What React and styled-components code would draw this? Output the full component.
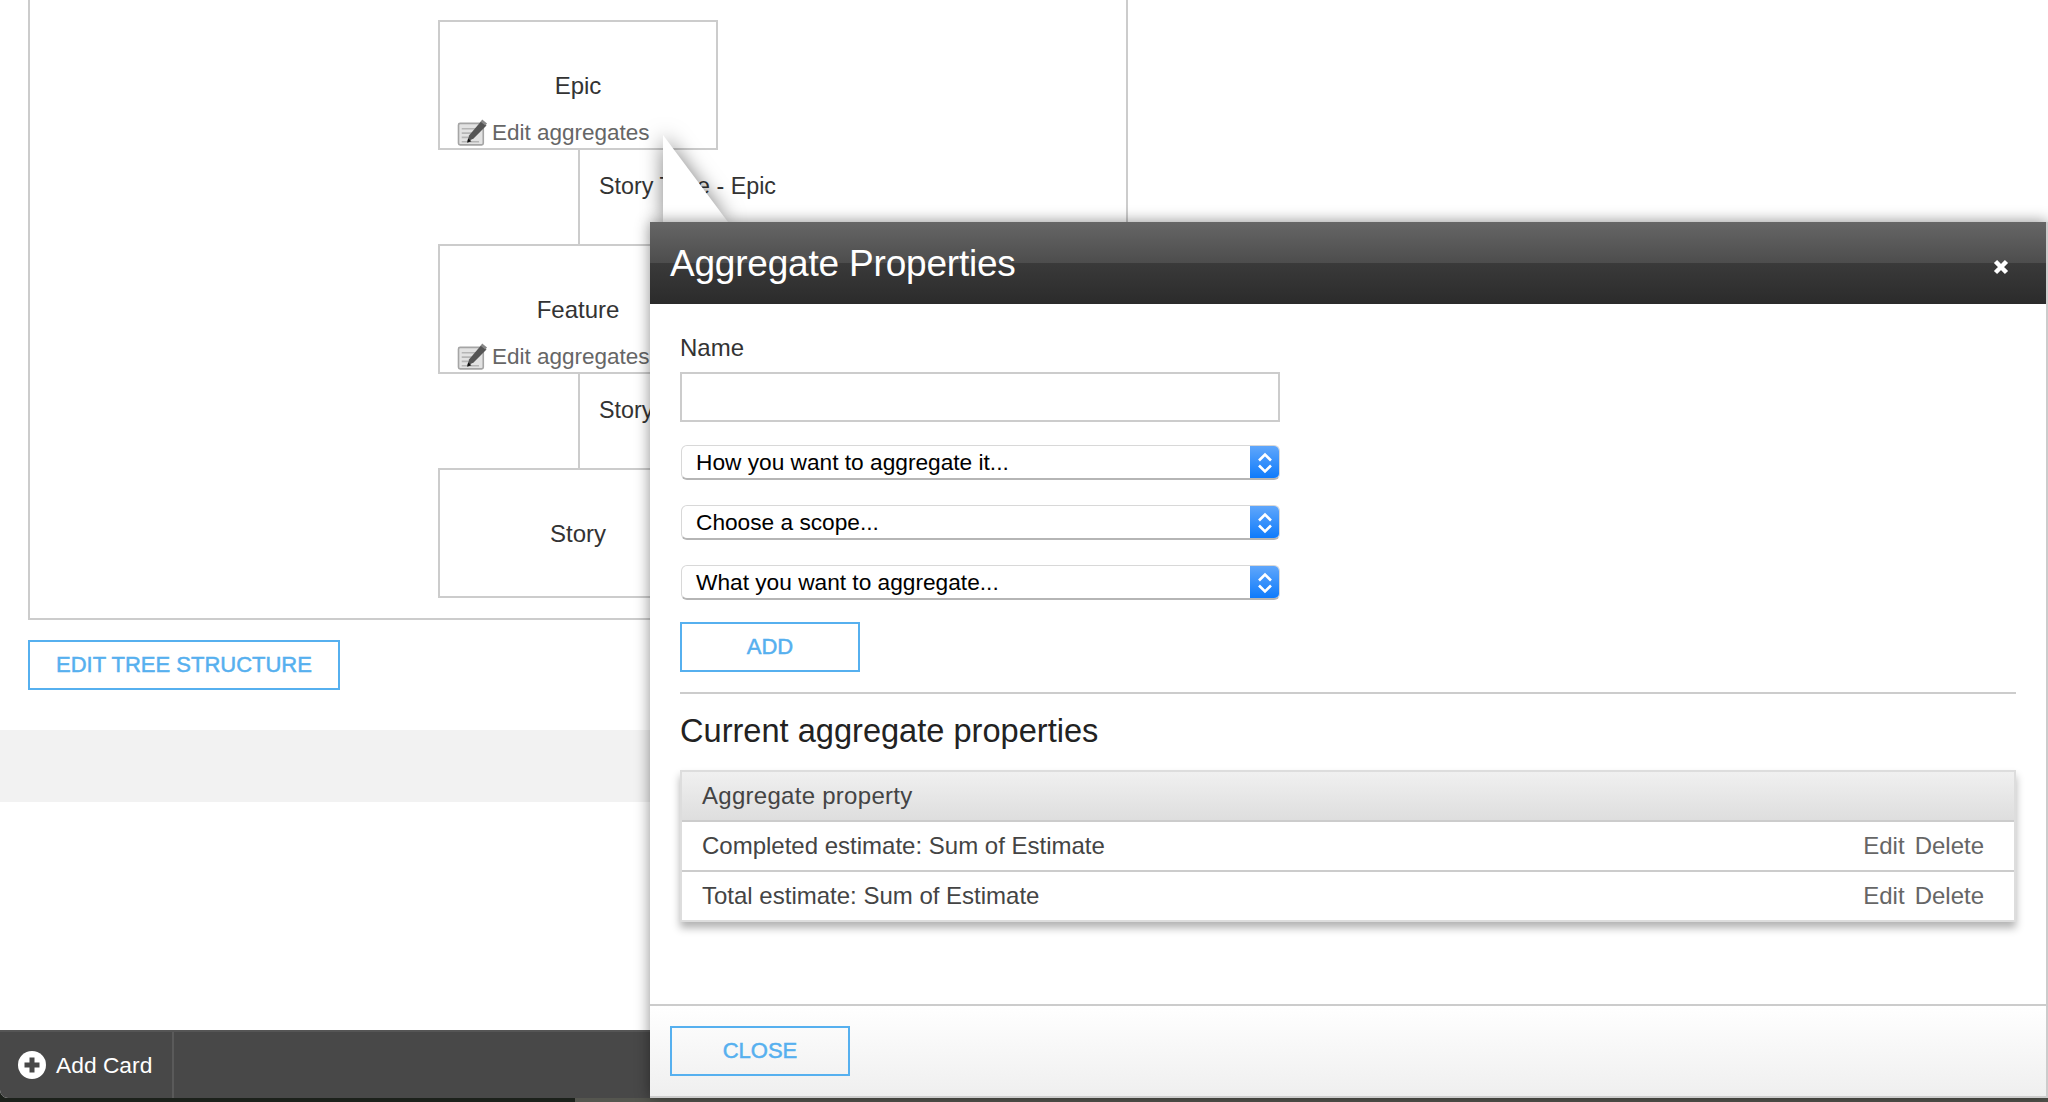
import React from 'react';
import styled, { createGlobalStyle } from 'styled-components';

const GlobalStyle = createGlobalStyle`
	html, body {
		margin: 0;
		padding: 0;
		background: #fff;
	}
	body {
		font-family: "Liberation Sans", Arial, sans-serif;
		color: #333;
	}
	* {
		box-sizing: border-box;
	}
`;

const Page = styled.div`
	position: relative;
	width: 2048px;
	height: 1102px;
	overflow: hidden;
	background: linear-gradient(90deg, #1c211b 0, #1c211b 575px, #55564f 575px);
`;

const Main = styled.div`
	display: flex;
	flex-direction: column;
	height: 1098px;
	background: #fff;
	border-bottom-left-radius: 8px;
`;

const TreePanel = styled.div`
	display: flex;
	flex-direction: column;
	align-items: center;
	width: 1100px;
	margin: -3px 0 0 28px;
	padding: 21px 0 20px;
	border: 2px solid #ccc;
`;

const Card = styled.div`
	position: relative;
	display: flex;
	flex-direction: column;
	width: 280px;
	height: 130px;
	border: 2px solid #ccc;
	background: #fff;
	font-size: 24px;
	color: #333;
	text-align: center;
	padding-top: 48px;
	line-height: 32px;
`;

const EditRow = styled.div`
	display: flex;
	align-items: center;
	gap: 4px;
	margin: 17px 0 0 17px;
	font-size: 22.5px;
	line-height: 28px;
	color: #666;
	white-space: nowrap;
	svg {
		margin-top: -3px;
	}
`;

const Connector = styled.div`
	display: flex;
	align-items: center;
	align-self: flex-start;
	height: 94px;
	margin-left: 50%;
	padding: 0 0 21px 19px;
	border-left: 2px solid #ccc;
	font-size: 23.3px;
	color: #333;
	white-space: nowrap;
`;

const OutlineButton = styled.button`
	display: block;
	width: ${props => props.$width}px;
	height: 50px;
	padding: 0;
	border: 2px solid #56b0ef;
	background: transparent;
	color: #56b0ef;
	font-family: inherit;
	font-size: 22px;
	font-weight: 400;
	text-align: center;
	-webkit-text-stroke: 0.5px #56b0ef;
`;

const EditTreeButton = styled(OutlineButton)`
	margin: 20px 0 0 28px;
	flex: none;
`;

const GreyBand = styled.div`
	height: 72px;
	margin-top: 40px;
	background: #f2f2f2;
`;

const BottomBar = styled.div`
	display: flex;
	align-items: stretch;
	height: 68px;
	margin-top: auto;
	background: #484848;
	border-top: 2px solid #555;
	border-bottom-left-radius: 8px;
`;

const AddCard = styled.div`
	display: flex;
	align-items: center;
	gap: 10px;
	width: 174px;
	padding-left: 18px;
	border-right: 2px solid #5a5a5a;
	color: #fff;
	font-size: 22.8px;
`;

const Tail = styled.svg`
	position: absolute;
	top: 120px;
	left: 640px;
	filter: drop-shadow(0 0 10px rgba(0, 0, 0, 0.5));
`;

const Modal = styled.div`
	position: absolute;
	top: 222px;
	left: 650px;
	right: 0;
	height: 876px;
	display: flex;
	flex-direction: column;
	background: #fff;
	border-right: 2px solid #ccc;
	border-bottom: 2px solid #ccc;
	box-shadow: 0 0 14px rgba(0, 0, 0, 0.45);
`;

const ModalHeader = styled.div`
	display: flex;
	align-items: center;
	justify-content: space-between;
	flex: none;
	height: 82px;
	padding: 0 37px 0 20px;
	background: linear-gradient(#666 0, #4d4d4d 50%, #3a3a3a 50%, #2b2b2b 100%);
	color: #fff;
`;

const ModalTitle = styled.h2`
	margin: 2px 0 0;
	font-size: 37px;
	font-weight: 400;
	letter-spacing: -0.2px;
	line-height: 44px;
`;

const CloseIcon = styled.svg`
	margin-top: 8px;
`;

const ModalBody = styled.div`
	flex: 1;
	padding: 27px 30px 0;
`;

const FieldLabel = styled.label`
	display: block;
	height: 41px;
	font-size: 24px;
	line-height: 34px;
	color: #333;
`;

const TextInput = styled.input`
	display: block;
	width: 600px;
	height: 50px;
	border: 2px solid #ccc;
	background: #fff;
	outline: none;
`;

const SelectBox = styled.div`
	display: flex;
	align-items: center;
	width: 599px;
	height: 35px;
	margin: ${props => props.$top}px 0 0 1px;
	padding: 1px 0 0 14px;
	border: 1px solid #d8d8d8;
	border-bottom: 2px solid #b5b5b5;
	border-radius: 6px;
	background: #fff;
	color: #000;
	font-size: 22.7px;
	position: relative;
	overflow: hidden;
`;

const Stepper = styled.span`
	position: absolute;
	top: -1px;
	right: -1px;
	bottom: -2px;
	width: 30px;
	display: flex;
	align-items: center;
	justify-content: center;
	background: linear-gradient(#62a8fb, #0a78fb);
`;

const AddButton = styled(OutlineButton)`
	margin-top: 22px;
`;

const Divider = styled.hr`
	height: 2px;
	margin: 20px 0 0;
	border: 0;
	background: #ccc;
`;

const SectionTitle = styled.h3`
	margin: 19px 0 21px;
	font-size: 32.6px;
	font-weight: 400;
	line-height: 36px;
	color: #222;
`;

const PropsTable = styled.div`
	border: 2px solid #ddd;
	box-shadow: 0 6px 8px rgba(0, 0, 0, 0.3);
	font-size: 24px;
	color: #444;
`;

const TableHead = styled.div`
	display: flex;
	align-items: center;
	height: 50px;
	padding-left: 20px;
	background: linear-gradient(#f0f0f0, #dedede);
	border-bottom: 2px solid #ccc;
	letter-spacing: 0.28px;
`;

const TableRow = styled.div`
	display: flex;
	align-items: center;
	justify-content: space-between;
	height: ${props => (props.$last ? 48 : 50)}px;
	padding: 0 30px 0 20px;
	background: #fff;
	border-bottom: ${props => (props.$last ? 0 : '2px solid #ccc')};
`;

const RowActions = styled.div`
	display: flex;
	gap: 10px;
	color: #666;
`;

const ModalFooter = styled.div`
	flex: none;
	height: 92px;
	padding: 20px 0 0 20px;
	border-top: 2px solid #ccc;
	background: linear-gradient(#fff, #efefef);
`;

const EditIcon = () => (
	<svg width="31" height="28" viewBox="0 0 28 26">
		<rect x="1" y="5" width="23" height="20" rx="1.5" fill="#e2e2e2" stroke="#a5a5a5" strokeWidth="1.5" />
		<path d="M4 10h16M4 14h10M4 18h8M4 22h16" stroke="#b5b5b5" strokeWidth="1.5" />
		<path d="M9 22l2-6L22 3l5 4-12 12z" fill="#555" />
		<path d="M23 1.5l4.5 3.5-1.5 2-4.5-3.5z" fill="#888" />
		<path d="M9 23l1-4 3 2.5z" fill="#111" />
	</svg>
);

const PlusIcon = () => (
	<svg width="28" height="28" viewBox="0 0 28 28">
		<circle cx="14" cy="14" r="14" fill="#fff" />
		<path d="M14 6.5v15M6.5 14h15" stroke="#484848" strokeWidth="5" />
	</svg>
);

const StepperIcon = () => (
	<svg width="16" height="24" viewBox="0 0 16 24" fill="none" stroke="#fff" strokeWidth="2.6">
		<path d="M2 9.5L8 3.5l6 6M2 14.5l6 6 6-6" />
	</svg>
);

const selects = [
	{ label: 'How you want to aggregate it...', top: 23 },
	{ label: 'Choose a scope...', top: 25 },
	{ label: 'What you want to aggregate...', top: 25 },
];

const rows = ['Completed estimate: Sum of Estimate', 'Total estimate: Sum of Estimate'];

export default function App() {
	return (
		<Page>
			<GlobalStyle />
			<Main>
				<TreePanel>
					<Card>
						Epic
						<EditRow>
							<EditIcon />
							Edit aggregates
						</EditRow>
					</Card>
					<Connector>Story Type - Epic</Connector>
					<Card>
						Feature
						<EditRow>
							<EditIcon />
							Edit aggregates
						</EditRow>
					</Card>
					<Connector>Story Type - Feature</Connector>
					<Card>Story</Card>
				</TreePanel>
				<EditTreeButton $width={312}>EDIT TREE STRUCTURE</EditTreeButton>
				<GreyBand />
				<BottomBar>
					<AddCard>
						<PlusIcon />
						Add Card
					</AddCard>
				</BottomBar>
			</Main>

			<Tail width="110" height="110" viewBox="0 0 110 110">
				<polygon points="23,15 88,102 23,102" fill="#fff" />
			</Tail>

			<Modal>
				<ModalHeader>
					<ModalTitle>Aggregate Properties</ModalTitle>
					<CloseIcon width="16" height="16" viewBox="0 0 16 16">
						<path d="M2.5 2.5l11 11M13.5 2.5l-11 11" stroke="#fff" strokeWidth="4.5" />
					</CloseIcon>
				</ModalHeader>
				<ModalBody>
					<FieldLabel>Name</FieldLabel>
					<TextInput />
					{selects.map(select => (
						<SelectBox key={select.label} $top={select.top}>
							{select.label}
							<Stepper>
								<StepperIcon />
							</Stepper>
						</SelectBox>
					))}
					<AddButton $width={180}>ADD</AddButton>
					<Divider />
					<SectionTitle>Current aggregate properties</SectionTitle>
					<PropsTable>
						<TableHead>Aggregate property</TableHead>
						{rows.map((row, i) => (
							<TableRow key={row} $last={i === rows.length - 1}>
								{row}
								<RowActions>
									<span>Edit</span>
									<span>Delete</span>
								</RowActions>
							</TableRow>
						))}
					</PropsTable>
				</ModalBody>
				<ModalFooter>
					<OutlineButton $width={180}>CLOSE</OutlineButton>
				</ModalFooter>
			</Modal>
		</Page>
	);
}
